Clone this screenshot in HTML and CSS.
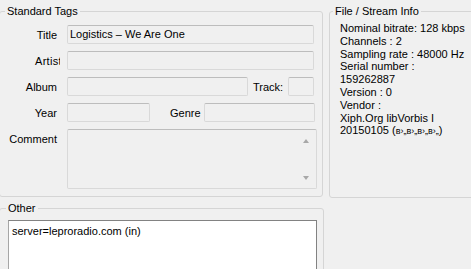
FILE: index.html
```html
<!DOCTYPE html>
<html lang="en">

<head>
    <meta charset="UTF-8">
    <title>Tags</title>
    <link rel="stylesheet" href="styles.css">
</head>

<body>
    <div class="dialog">
        <div class="col_left">
            <fieldset class="box box_std">
                <legend>Standard Tags</legend>
                <div class="row">
                    <span class="lbl">Title</span>
                    <div class="field w_full">Logistics – We Are One</div>
                </div>
                <div class="row">
                    <span class="lbl lbl_clip"><span>Artist</span></span>
                    <div class="field w_full"></div>
                </div>
                <div class="row">
                    <span class="lbl">Album</span>
                    <div class="field w_album"></div>
                    <span class="lbl_track">Track:</span>
                    <div class="field w_track"></div>
                </div>
                <div class="row">
                    <span class="lbl">Year</span>
                    <div class="field w_year"></div>
                    <span class="lbl_genre">Genre</span>
                    <div class="field w_genre"></div>
                </div>
                <div class="row row_comment">
                    <span class="lbl lbl_top">Comment</span>
                    <div class="field memo">
                        <div class="scroll">
                            <span class="arr arr_up"></span>
                            <span class="arr arr_down"></span>
                        </div>
                    </div>
                </div>
            </fieldset>

            <fieldset class="box box_other">
                <legend>Other</legend>
                <div class="other_text">server=leproradio.com (in)</div>
            </fieldset>
        </div>

        <div class="col_right">
            <fieldset class="box box_info">
                <legend>File / Stream Info</legend>
                <div class="info">
                    <div>Nominal bitrate: 128 kbps</div>
                    <div>Channels : 2</div>
                    <div>Sampling rate : 48000 Hz</div>
                    <div>Serial number :</div>
                    <div>159262887</div>
                    <div>Version : 0</div>
                    <div>Vendor :</div>
                    <div>Xiph.Org libVorbis I</div>
                    <div>20150105 (<span class="small">в›„в›„в›„в›„</span>)</div>
                </div>
            </fieldset>
            <span class="check"></span>
        </div>
    </div>
</body>

</html>
```

FILE: styles.css
```css
* {
    margin: 0;
    padding: 0;
    box-sizing: border-box;
}

body {
    width: 471px;
    height: 269px;
    overflow: hidden;
    background-color: #f0f0f0;
    font-family: "Liberation Sans", Arial, sans-serif;
    font-size: 11px;
    color: #000;
}

.dialog {
    display: flex;
    align-items: flex-start;
}

.col_left {
    width: 325px;
    margin-left: -1px;
    flex-shrink: 0;
}

.col_right {
    width: 150px;
    margin-left: 5px;
    flex-shrink: 0;
}

/* group boxes */
.box {
    border: 1px solid #d5d5d5;
    border-radius: 3px;
    min-width: 0;
}

.box legend {
    line-height: 12px;
    padding: 0 2px;
    margin-left: 5px;
}

.box_std {
    width: 324px;
    margin-top: 5px;
    padding: 8px 0 7px 0;
}

.box_other {
    width: 325px;
    margin-top: 5px;
    padding: 6px 0 0 0;
    height: 90px;
}

.box_other legend {
    margin-left: 6px;
}

.box_info {
    width: 150px;
    margin-top: 5px;
    padding: 0;
    height: 193px;
}

.box_info legend {
    margin-left: 3px;
}

/* rows in Standard Tags */
.row {
    display: flex;
    align-items: center;
    height: 19px;
    margin-bottom: 7px;
}

.row:last-child {
    margin-bottom: 0;
}

.row_comment {
    height: 60px;
    align-items: flex-start;
}

.lbl {
    width: 60px;
    margin-right: 7px;
    padding-right: 3px;
    text-align: right;
    white-space: nowrap;
    flex-shrink: 0;
}

.lbl_clip {
    overflow: hidden;
    text-align: left;
    padding-left: 35px;
    padding-right: 0;
}

.lbl_clip span {
    letter-spacing: 0.3px;
}

.lbl_top {
    padding-top: 4px;
}

.field {
    height: 19px;
    border: 1px solid #d9d9d9;
    border-top-color: #bdbdbd;
    border-radius: 2px;
    background-color: #f0f0f0;
    padding: 0 2px;
    line-height: 17px;
    white-space: nowrap;
    overflow: hidden;
    flex-shrink: 0;
}

.w_full {
    width: 247px;
}

.w_album {
    width: 181px;
}

.w_track {
    width: 26px;
}

.w_year {
    width: 83px;
}

.w_genre {
    width: 111px;
}

.lbl_track {
    width: 40px;
    padding-left: 5px;
}

.lbl_genre {
    width: 54px;
    padding-left: 20px;
}

.memo {
    width: 250px;
    height: 60px;
    display: flex;
    justify-content: flex-end;
    padding: 0;
}

.scroll {
    width: 17px;
    height: 58px;
    display: flex;
    flex-direction: column;
    justify-content: space-between;
    align-items: center;
    padding: 9px 0 8px 0;
    margin-right: 2px;
}

.arr {
    width: 0;
    height: 0;
    border-left: 3.5px solid transparent;
    border-right: 3.5px solid transparent;
}

.arr_up {
    border-bottom: 4px solid #a8a8a8;
}

.arr_down {
    border-top: 4px solid #a8a8a8;
}

/* Other */
.other_text {
    width: 309px;
    height: 80px;
    margin-left: 8px;
    background-color: #fff;
    border: 1px solid #a6a6a6;
    border-top-color: #828282;
    border-right-color: #828282;
    padding: 4px 3px;
    line-height: 13px;
}

/* File / Stream Info */
.info {
    padding: 5px 0 0 10px;
    line-height: 12.8px;
    white-space: nowrap;
}

.small {
    font-size: 9px;
}

.check {
    display: block;
    width: 13px;
    height: 13px;
    margin: 71px 0 0 6px;
    border: 1px solid #8f8f8f;
    background-color: #fbfbfb;
}
```
